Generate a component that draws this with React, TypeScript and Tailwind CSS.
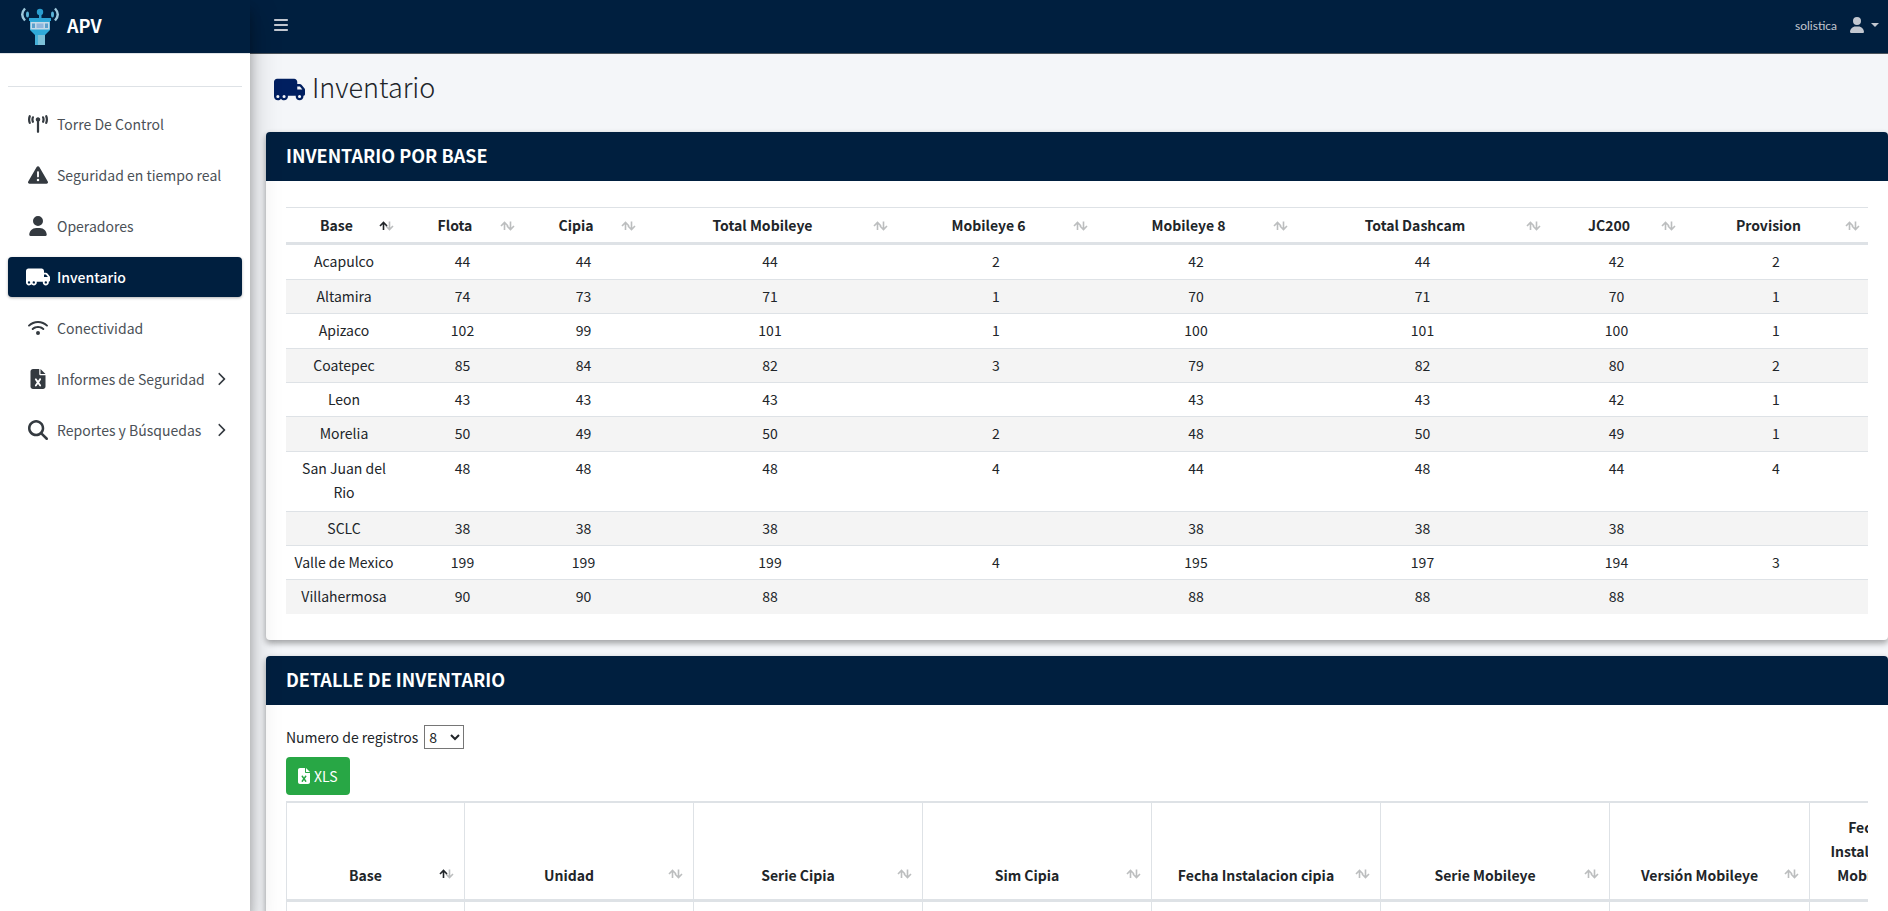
import React from 'react';
import {
  FaBars,
  FaChevronRight,
  FaFileExcel,
  FaMagnifyingGlass,
  FaTowerBroadcast,
  FaTriangleExclamation,
  FaTruckMoving,
  FaUser,
  FaWifi,
} from 'react-icons/fa6';

const navItems = [
  { label: 'Torre De Control', icon: FaTowerBroadcast },
  { label: 'Seguridad en tiempo real', icon: FaTriangleExclamation },
  { label: 'Operadores', icon: FaUser },
  { label: 'Inventario', icon: FaTruckMoving, active: true },
  { label: 'Conectividad', icon: FaWifi },
  { label: 'Informes de Seguridad', icon: FaFileExcel, hasChildren: true },
  { label: 'Reportes y Búsquedas', icon: FaMagnifyingGlass, hasChildren: true },
];

const baseColumns = [
  { label: 'Base', width: 'w-[116px]' },
  { label: 'Flota', width: 'w-[121px]' },
  { label: 'Cipia', width: 'w-[121px]' },
  { label: 'Total Mobileye', width: 'w-[252px]' },
  { label: 'Mobileye 6', width: 'w-[200px]' },
  { label: 'Mobileye 8', width: 'w-[200px]' },
  { label: 'Total Dashcam', width: 'w-[253px]' },
  { label: 'JC200', width: 'w-[135px]' },
  { label: 'Provision', width: 'w-[184px]' },
];

const baseRows = [
  ['Acapulco', '44', '44', '44', '2', '42', '44', '42', '2'],
  ['Altamira', '74', '73', '71', '1', '70', '71', '70', '1'],
  ['Apizaco', '102', '99', '101', '1', '100', '101', '100', '1'],
  ['Coatepec', '85', '84', '82', '3', '79', '82', '80', '2'],
  ['Leon', '43', '43', '43', '', '43', '43', '42', '1'],
  ['Morelia', '50', '49', '50', '2', '48', '50', '49', '1'],
  ['San Juan del Rio', '48', '48', '48', '4', '44', '48', '44', '4'],
  ['SCLC', '38', '38', '38', '', '38', '38', '38', ''],
  ['Valle de Mexico', '199', '199', '199', '4', '195', '197', '194', '3'],
  ['Villahermosa', '90', '90', '88', '', '88', '88', '88', ''],
];

const detailColumns = [
  { label: 'Base', width: 'w-[178px]' },
  { label: 'Unidad', width: 'w-[229px]' },
  { label: 'Serie Cipia', width: 'w-[229px]' },
  { label: 'Sim Cipia', width: 'w-[229px]' },
  { label: 'Fecha Instalacion cipia', width: 'w-[229px]' },
  { label: 'Serie Mobileye', width: 'w-[229px]' },
  { label: 'Versión Mobileye', width: 'w-[200px]' },
  { label: 'Fecha Instalacion Mobileye', width: 'w-[138px]' },
];

const SortIcon = ({ active = false }: { active?: boolean }) => (
  <svg width="15" height="10" viewBox="0 0 15 10" fill="none" strokeWidth="1.6" aria-hidden="true">
    <path d="M10.500 0.500v8M7 5L10.500 8.500L14 5" stroke="#bcbebf" />
    <path d="M4.500 9V1.500M1 5L4.500 1.500L8 5" stroke={active ? '#212529' : '#bcbebf'} />
  </svg>
);

const Logo = () => (
  <svg width="40" height="40" viewBox="0 0 40 40" aria-hidden="true">
    <g fill="none" stroke="#9fc9dc" strokeWidth="2.4">
      <path d="M5 1.500Q-0.500 7.500 5 13.500" />
      <path d="M35 1.500Q40.500 7.500 35 13.500" />
    </g>
    <ellipse cx="7.500" cy="7.500" rx="1.500" ry="3" fill="#5ab4d8" />
    <ellipse cx="32.500" cy="7.500" rx="1.500" ry="3" fill="#5ab4d8" />
    <path d="M19 4h2.500v9H19z" fill="#2a9fd0" />
    <circle cx="20" cy="5" r="3.200" fill="#2a9fd0" />
    <path d="M9 11h22v3H9z" fill="#2ea5d6" />
    <path d="M10 14h20v9l-5 5v10H15V28l-5-5z" fill="#2faad9" />
    <path d="M10.500 15h19v7.500h-19z" fill="#c3d9e8" />
    <path d="M12 16.500h3v4.500h-3zM25 16.500h3v4.500h-3z" fill="#5b9fcb" />
    <path d="M16.500 16.500h7v4.500h-7z" fill="#8fb6dc" />
    <path d="M15 28h10v10H15z" fill="#7cc0d8" />
    <path d="M15 28h3v10h-3z" fill="#46b0d8" />
  </svg>
);

const Sidebar = () => (
  <aside className="relative z-20 w-[250px] shrink-0 bg-white shadow-[0_14px_28px_rgba(0,0,0,0.25),0_10px_10px_rgba(0,0,0,0.22)]">
    <a href="#" className="flex h-[54px] items-center gap-[7px] border-b border-[#dee2e6] bg-[#001f3f] pb-1 pl-5 text-white">
      <span className="pt-1">
        <Logo />
      </span>
      <span className="text-[18px] leading-6 font-bold">APV</span>
    </a>
    <nav className="px-2">
      <div className="mb-[17px] h-[33px] border-b border-[#dee2e6]"></div>
      <ul className="flex flex-col gap-[11px]">
        {navItems.map(({ label, icon: Icon, active, hasChildren }) => (
          <li key={label}>
            <a
              href="#"
              className={
                active
                  ? 'flex h-10 items-center rounded bg-[#001f3f] pr-3.5 pl-4 font-medium text-white shadow-[0_1px_3px_rgba(0,0,0,0.3)]'
                  : 'flex h-10 items-center rounded pr-3.5 pl-4 text-[#343a40]'
              }
            >
              <span className="flex w-7 shrink-0 justify-center">
                <Icon className={active ? 'size-6' : 'size-5'} />
              </span>
              <span className={active ? 'ml-[5px] whitespace-nowrap' : 'ml-[5px] whitespace-nowrap text-[#4b5157]'}>{label}</span>
              {hasChildren && <FaChevronRight className="ml-auto size-3.5" />}
            </a>
          </li>
        ))}
      </ul>
    </nav>
  </aside>
);

const Navbar = () => (
  <header className="flex h-[54px] items-center justify-between border-b border-[#4b545c] bg-[#001f3f] pr-[9px] pb-1 pl-[23px] text-[#c2c7d0]">
    <button type="button" aria-label="Menu">
      <FaBars className="size-4" />
    </button>
    <button type="button" className="flex items-center gap-3 font-['Lato',sans-serif] text-[12px]">
      <span className="pt-0.5">solistica</span>
      <span className="flex items-center gap-1.5">
        <FaUser className="size-4" />
        <span className="border-x-4 border-t-4 border-x-transparent border-t-[#c2c7d0]"></span>
      </span>
    </button>
  </header>
);

const Card = ({ title, children }: { title: string; children: React.ReactNode }) => (
  <section className="mb-4 rounded bg-white shadow-[0_3px_6px_rgba(0,0,0,0.16),0_3px_6px_rgba(0,0,0,0.23)]">
    <h2 className="rounded-t bg-[#001f3f] px-5 pt-[11px] pb-[13px] text-[18px] leading-[25px] font-bold text-white">{title}</h2>
    {children}
  </section>
);

const BaseTable = () => (
  <table className="h-[407px] w-full table-fixed border-collapse text-center">
    <thead>
      <tr className="h-9 border-t border-b-[3px] border-[#dee2e6]">
        {baseColumns.map(({ label, width }, i) => (
          <th key={label} className={`${width} relative py-1 pr-[30px] pl-[15px] font-bold`}>
            {label}
            <span className="absolute right-2 bottom-[11px]">
              <SortIcon active={i === 0} />
            </span>
          </th>
        ))}
      </tr>
    </thead>
    <tbody>
      {baseRows.map((row) => (
        <tr key={row[0]} className="border-t border-[#dee2e6] align-top even:bg-[#f4f4f4]">
          {row.map((value, i) => (
            <td key={i} className="px-1 py-1">
              {value}
            </td>
          ))}
        </tr>
      ))}
    </tbody>
  </table>
);

const DetailTable = () => (
  <div className="overflow-x-hidden">
    <table className="w-[1661px] table-fixed border-collapse border border-t-2 border-[#dee2e6] text-center">
      <thead>
        <tr className="border-b-[3px] border-[#dee2e6]">
          {detailColumns.map(({ label, width }, i) => (
            <th key={label} className={`${width} relative border-x border-[#dee2e6] py-3 pr-[30px] pl-2.5 align-bottom font-bold`}>
              {label}
              <span className="absolute right-2.5 bottom-5">
                <SortIcon active={i === 0} />
              </span>
            </th>
          ))}
        </tr>
      </thead>
      <tbody>
        <tr className="h-12">
          {detailColumns.map(({ label }) => (
            <td key={label} className="border-x border-[#dee2e6]"></td>
          ))}
        </tr>
      </tbody>
    </table>
  </div>
);

const App: React.FC = () => {
  return (
    <div className="flex h-screen overflow-hidden bg-[#f4f6f9] font-['Noto_Sans_CJK_SC',sans-serif] text-[14px] leading-6 text-[#212529]">
      <Sidebar />
      <div className="min-w-0 flex-1">
        <Navbar />
        <main className="pl-4">
          <div className="flex h-[78px] items-center gap-[7px] pb-2 pl-2">
            <FaTruckMoving className="size-[31px] text-[#001f60]" />
            <h1 className="pb-1 text-[27px] leading-9 font-light">Inventario</h1>
          </div>
          <Card title="INVENTARIO POR BASE">
            <div className="px-5 py-[26px]">
              <BaseTable />
            </div>
          </Card>
          <Card title="DETALLE DE INVENTARIO">
            <div className="px-5 pt-5">
              <div className="flex items-center gap-1.5">
                <label htmlFor="page-size">Numero de registros</label>
                <select id="page-size" defaultValue="8" className="h-6 w-10 border border-[#767676] bg-white">
                  <option>8</option>
                  <option>16</option>
                  <option>32</option>
                </select>
              </div>
              <button type="button" className="mt-2 mb-1.5 flex h-[38px] items-center gap-1 rounded bg-[#28a745] px-3 text-white">
                <FaFileExcel className="h-4 w-3" />
                XLS
              </button>
              <DetailTable />
            </div>
          </Card>
        </main>
      </div>
    </div>
  );
};

export default App;
